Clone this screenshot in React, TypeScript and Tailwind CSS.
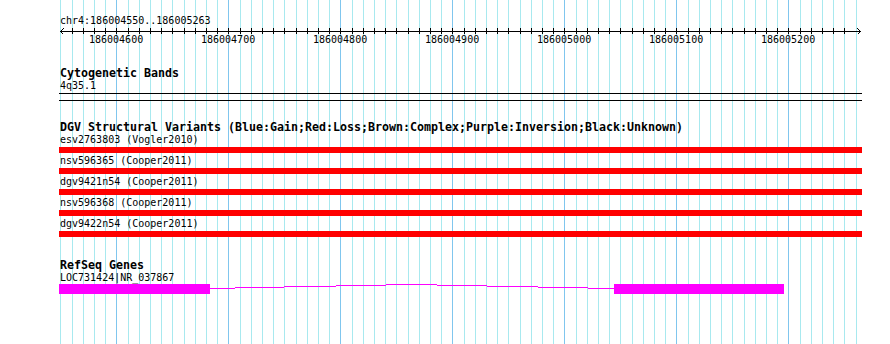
import React from 'react'

const GRID = Array.from({ length: 72 }, (_, k) => Math.round(60.4 + 11.2 * k))
const MAJOR = [116, 228, 340, 452, 564, 676, 788]
const LABELS = ['186004600', '186004700', '186004800', '186004900', '186005000', '186005100', '186005200']

const VARIANTS = [
  'esv2763803 (Vogler2010)',
  'nsv596365 (Cooper2011)',
  'dgv9421n54 (Cooper2011)',
  'nsv596368 (Cooper2011)',
  'dgv9422n54 (Cooper2011)',
]

// intron line steps: [x1, x2, row offset from box top]
const INTRON: [number, number, number][] = [
  [210, 235, 4],
  [235, 284, 3],
  [284, 336, 2],
  [336, 386, 1],
  [386, 437, 0],
  [437, 487, 1],
  [487, 538, 2],
  [538, 588, 3],
  [588, 614, 4],
]

function Grid() {
  return (
    <svg className="absolute inset-0" width={890} height={344} shapeRendering="crispEdges">
      {GRID.map((x) => (
        <rect
          key={x}
          x={x}
          y={0}
          width={1}
          height={344}
          fill={MAJOR.includes(x) ? '#80c6ee' : '#a8e9ef'}
        />
      ))}
    </svg>
  )
}

function Ruler() {
  return (
    <svg className="block" width={890} height={8} shapeRendering="crispEdges">
      <rect x={60} y={4} width={801} height={1} fill="#000" />
      {GRID.filter((x) => x > 62 && x < 856).map((x) => (
        <rect key={x} x={x} y={1} width={1} height={6} fill="#000" />
      ))}
      <polyline points="63.5,1.5 60.5,4.5 63.5,7.5" fill="none" stroke="#000" strokeWidth={1} />
      <polyline points="857.5,1.5 860.5,4.5 857.5,7.5" fill="none" stroke="#000" strokeWidth={1} />
    </svg>
  )
}

function Label({ children, tight }: { children: React.ReactNode; tight?: boolean }) {
  return (
    <div
      className={`relative z-10 ml-[60px] whitespace-pre ${tight ? 'h-[11px] leading-[11px]' : 'h-[12px] leading-[12px]'}`}
    >
      {children}
    </div>
  )
}

function Title({ children }: { children: React.ReactNode }) {
  return (
    <div className="ml-[60px] h-[13px] leading-[13px] text-[11.63px] font-bold whitespace-pre">
      {children}
    </div>
  )
}

export default function App() {
  return (
    <div className="relative w-[890px] h-[344px] overflow-hidden bg-white text-black text-[10px] font-['DejaVu_Sans_Mono','Liberation_Mono',monospace]">
      <Grid />

      <div className="relative z-10 flex flex-col pt-[15px]">
        {/* Ruler */}
        <Label>chr4:186004550..186005263</Label>
        <Ruler />
        <div className="relative h-[10px] leading-[10px]">
          {LABELS.map((l, i) => (
            <span key={l} className="absolute top-0 w-[54px] text-center" style={{ left: MAJOR[i] - 27 }}>
              {l}
            </span>
          ))}
        </div>

        {/* Cytogenetic Bands */}
        <div className="mt-[22px]">
          <Title>Cytogenetic Bands</Title>
          <Label>4q35.1</Label>
          <div className="ml-[59px] mt-px w-[803px] h-px bg-black" />
          <div className="ml-[59px] mt-[6px] w-[803px] h-px bg-black" />
        </div>

        {/* DGV */}
        <div className="mt-[20px] flex flex-col">
          <Title>DGV Structural Variants (Blue:Gain;Red:Loss;Brown:Complex;Purple:Inversion;Black:Unknown)</Title>
          {VARIANTS.map((v, i) => (
            <div key={v} className={i === 0 ? '' : 'mt-[2px]'}>
              <Label>{v}</Label>
              <div className="ml-[59px] mt-px w-[803px] h-[6px] bg-[#ff0000]" />
            </div>
          ))}
        </div>

        {/* RefSeq */}
        <div className="mt-[22px] flex flex-col">
          <Title>RefSeq Genes</Title>
          <Label tight>LOC731424|NR_037867</Label>
          <svg className="block mt-px" width={890} height={10} shapeRendering="crispEdges">
            <rect x={59} y={0} width={151} height={10} fill="#ff00ff" />
            <rect x={614} y={0} width={170} height={10} fill="#ff00ff" />
            {INTRON.map(([a, b, r]) => (
              <rect key={a} x={a} y={r} width={b - a} height={1} fill="#ff00ff" />
            ))}
          </svg>
        </div>
      </div>
    </div>
  )
}
